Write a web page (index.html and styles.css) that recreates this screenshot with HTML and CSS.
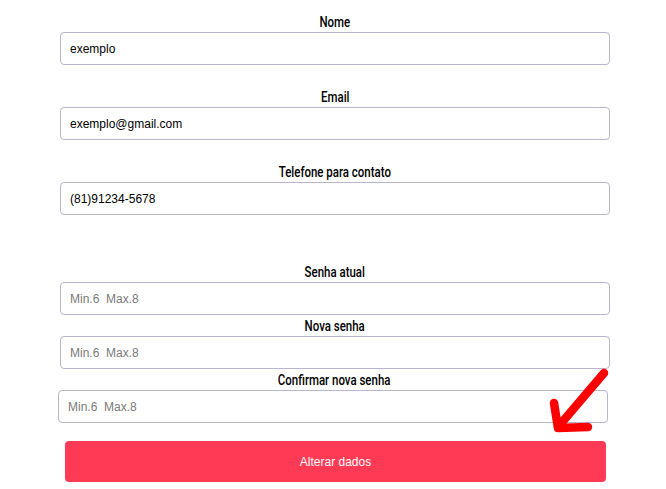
FILE: index.html
```html
<!DOCTYPE html>
<html lang="pt">
<head>
<meta charset="utf-8">
<title>Alterar dados</title>
<link rel="stylesheet" href="styles.css">
</head>
<body>
<main class="form">
  <div class="hint-box"></div>
  <section class="group group-contact">
    <div class="field">
      <label class="label" for="nome"><span class="label-text">Nome</span></label>
      <input class="input" id="nome" type="text" value="exemplo">
    </div>
    <div class="field">
      <label class="label" for="email"><span class="label-text">Email</span></label>
      <input class="input" id="email" type="text" value="exemplo@gmail.com">
    </div>
    <div class="field">
      <label class="label" for="tel"><span class="label-text">Telefone para contato</span></label>
      <input class="input" id="tel" type="text" value="(81)91234-5678">
    </div>
  </section>
  <section class="group group-password">
    <div class="field">
      <label class="label" for="atual"><span class="label-text">Senha atual</span></label>
      <input class="input" id="atual" type="password" placeholder="Min.6  Max.8">
    </div>
    <div class="field">
      <label class="label" for="nova"><span class="label-text">Nova senha</span></label>
      <input class="input" id="nova" type="password" placeholder="Min.6  Max.8">
    </div>
    <div class="field field-shift">
      <label class="label" for="conf"><span class="label-text">Confirmar nova senha</span></label>
      <input class="input" id="conf" type="password" placeholder="Min.6  Max.8">
    </div>
  </section>
  <button class="submit" type="button">Alterar dados</button>
  <svg class="arrow" width="80" height="80" viewBox="0 0 80 80" aria-hidden="true">
    <path d="M64 13 L18 67" fill="none" stroke="#ff0000" stroke-width="8.5" stroke-linecap="round"/>
    <path d="M14 43 L18 68 L48 67" fill="none" stroke="#ff0000" stroke-width="8.5" stroke-linecap="round" stroke-linejoin="round"/>
  </svg>
</main>
</body>
</html>
```
FILE: styles.css
```css
* { box-sizing: border-box; }
html, body { margin: 0; padding: 0; background: #ffffff; }
body { font-family: "Liberation Sans", Arial, sans-serif; }

.form {
  position: relative;
  width: 550px;
  margin-left: 60px;
  padding-top: 12px;
  display: flex;
  flex-direction: column;
}

.group { display: flex; flex-direction: column; }
.group-contact { gap: 22px; }
.group-password { margin-top: 47px; gap: 1px; }

.field { display: flex; flex-direction: column; }
.field-shift { margin-left: -2px; }

.label {
  display: block;
  height: 20px;
  line-height: 20px;
  text-align: center;
  font-family: Roboto, "Liberation Sans", sans-serif;
  font-size: 15.5px;
  font-weight: 500;
  color: #000000;
}
.label-text {
  display: inline-block;
  transform: scaleX(0.74);
  transform-origin: center;
  white-space: nowrap;
}

.input {
  width: 550px;
  height: 33px;
  padding: 0 9px;
  border: 1px solid #b9b5d1;
  border-radius: 4px;
  font-family: "Liberation Sans", Arial, sans-serif;
  font-size: 12px;
  color: #000000;
  background: #ffffff;
  outline: none;
}
.input::placeholder { color: #7a7a7a; }

.submit {
  margin-top: 18px;
  margin-left: 5px;
  width: 541px;
  height: 41px;
  border: none;
  border-radius: 4px;
  background: #ff3a55;
  color: #ffffff;
  font-family: "Liberation Sans", Arial, sans-serif;
  font-size: 12px;
}

.hint-box {
  position: absolute;
  z-index: -1;
  left: 465px;
  top: 342px;
  width: 111px;
  height: 116px;
  background: #fcfcfe;
}

.arrow {
  position: absolute;
  left: 480px;
  top: 360px;
  pointer-events: none;
}
```
